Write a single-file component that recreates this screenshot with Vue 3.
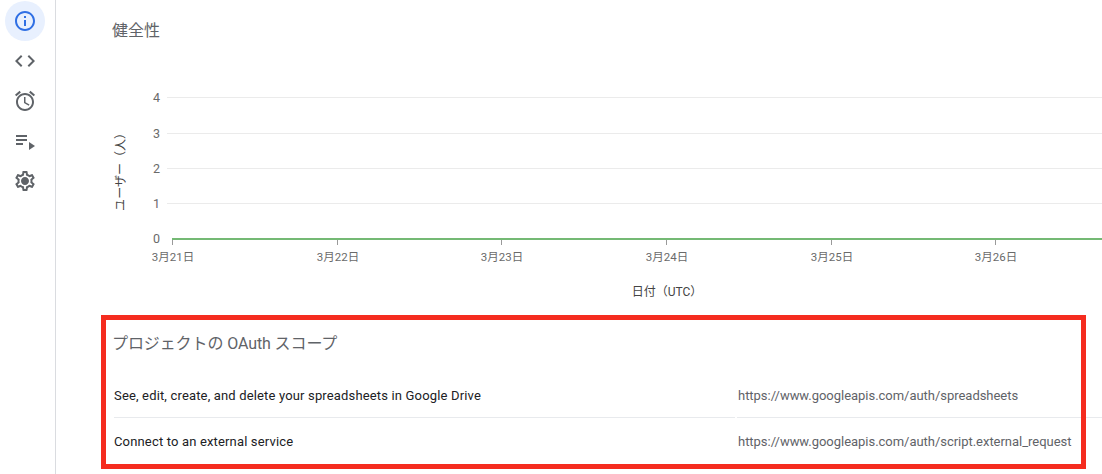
<script setup>
const yTicks = [
  { label: '4', y: 97.5 },
  { label: '3', y: 133.5 },
  { label: '2', y: 168.5 },
  { label: '1', y: 203.5 },
]
const xTicks = [
  { label: '3月21日', x: 172.5 },
  { label: '3月22日', x: 337.5 },
  { label: '3月23日', x: 501.5 },
  { label: '3月24日', x: 666.5 },
  { label: '3月25日', x: 831.5 },
  { label: '3月26日', x: 995.5 },
]
const scopes = [
  { name: 'See, edit, create, and delete your spreadsheets in Google Drive', url: 'https://www.googleapis.com/auth/spreadsheets' },
  { name: 'Connect to an external service', url: 'https://www.googleapis.com/auth/script.external_request' },
]
</script>

<template>
  <div class="page">
    <nav class="rail">
      <div class="nav-btn active">
        <svg viewBox="0 0 24 24" width="24" height="24"><path fill="#2f6fe4" d="M11 7h2v2h-2zm0 4h2v6h-2zm1-9C6.48 2 2 6.48 2 12s4.48 10 10 10 10-4.48 10-10S17.52 2 12 2zm0 18c-4.41 0-8-3.59-8-8s3.59-8 8-8 8 3.59 8 8-3.59 8-8 8z"/></svg>
      </div>
      <div class="nav-btn">
        <svg viewBox="0 0 24 24" width="24" height="24"><path fill="#5f6368" d="M9.4 16.6 4.8 12l4.6-4.6L8 6l-6 6 6 6 1.4-1.4zm5.2 0 4.6-4.6-4.6-4.6L16 6l6 6-6 6-1.4-1.4z"/></svg>
      </div>
      <div class="nav-btn">
        <svg viewBox="0 0 24 24" width="24" height="24"><path fill="#5f6368" d="M22 5.72l-4.6-3.86-1.29 1.53 4.6 3.86L22 5.72zM7.88 3.39 6.6 1.86 2 5.71l1.29 1.53 4.59-3.85zM12.5 8H11v6l4.75 2.85.75-1.23-4-2.37V8zM12 4c-4.97 0-9 4.03-9 9s4.03 9 9 9 9-4.03 9-9-4.03-9-9-9zm0 16c-3.87 0-7-3.13-7-7s3.13-7 7-7 7 3.13 7 7-3.13 7-7 7z"/></svg>
      </div>
      <div class="nav-btn">
        <svg viewBox="0 0 24 24" width="24" height="24"><path fill="#5f6368" d="M3 10h11v2H3zm0-4h11v2H3zm0 8h7v2H3zm13-1v8l6-4z"/></svg>
      </div>
      <div class="nav-btn">
        <svg viewBox="0 0 24 24" width="24" height="24"><path fill="#5f6368" d="M19.43 12.98c.04-.32.07-.64.07-.98s-.03-.66-.07-.98l2.11-1.65c.19-.15.24-.42.12-.64l-2-3.46c-.12-.22-.39-.3-.61-.22l-2.49 1c-.52-.4-1.08-.73-1.69-.98l-.38-2.65A.488.488 0 0 0 14 2h-4c-.25 0-.46.18-.49.42l-.38 2.65c-.61.25-1.17.59-1.69.98l-2.49-1a.566.566 0 0 0-.18-.03c-.17 0-.34.09-.43.25l-2 3.46c-.13.22-.07.49.12.64l2.11 1.65c-.04.32-.07.65-.07.98s.03.66.07.98l-2.11 1.65c-.19.15-.24.42-.12.64l2 3.46c.12.22.39.3.61.22l2.49-1c.52.4 1.08.73 1.69.98l.38 2.65c.03.24.24.42.49.42h4c.25 0 .46-.18.49-.42l.38-2.65c.61-.25 1.17-.59 1.69-.98l2.49 1c.06.02.12.03.18.03.17 0 .34-.09.43-.25l2-3.46c.12-.22.07-.49-.12-.64l-2.11-1.65zm-1.98-1.71c.04.31.05.52.05.73s-.02.43-.05.73l-.14 1.13.89.7 1.08.84-.7 1.21-1.27-.51-1.04-.42-.9.68c-.43.32-.84.56-1.25.73l-1.06.43-.16 1.13-.2 1.35h-1.4l-.19-1.35-.16-1.13-1.06-.43c-.43-.18-.83-.41-1.23-.71l-.91-.7-1.06.43-1.27.51-.7-1.21 1.08-.84.89-.7-.14-1.13c-.03-.31-.05-.54-.05-.74s.02-.43.05-.73l.14-1.13-.89-.7-1.08-.84.7-1.21 1.27.51 1.04.42.9-.68c.43-.32.84-.56 1.25-.73l1.06-.43.16-1.13.2-1.35h1.39l.19 1.35.16 1.13 1.06.43c.43.18.83.41 1.23.71l.91.7 1.06-.43 1.27-.51.7 1.21-1.07.85-.89.7.14 1.13zM12 8c-2.21 0-4 1.79-4 4s1.79 4 4 4 4-1.79 4-4-1.79-4-4-4z"/></svg>
      </div>
    </nav>

    <main class="main">
      <h2 class="title health">健全性</h2>

      <svg class="chart" width="1046" height="256" viewBox="56 52 1046 256">
        <g v-for="t in yTicks" :key="t.label">
          <line x1="167" :y1="t.y" x2="1102" :y2="t.y" stroke="#ebebeb" />
          <text x="160" :y="t.y + 4" text-anchor="end" class="tick num">{{ t.label }}</text>
        </g>
        <text x="160" y="243" text-anchor="end" class="tick num">0</text>
        <g v-for="t in xTicks" :key="t.x">
          <line :x1="t.x" y1="239" :x2="t.x" y2="245" stroke="#9a9a9a" />
          <text :x="t.x + 0.5" y="261" text-anchor="middle" class="tick">{{ t.label }}</text>
        </g>
        <line x1="172" y1="239" x2="1102" y2="239" stroke="#74b974" stroke-width="2" />
        <text x="667" y="296" text-anchor="middle" class="axis">日付（UTC）</text>
        <text transform="translate(125 169) rotate(-90)" text-anchor="middle" class="axis">ユーザー（人）</text>
      </svg>

      <section class="scopes">
        <h2 class="title scope-title">プロジェクトの OAuth スコープ</h2>
        <div class="rows">
          <div v-for="s in scopes" :key="s.url" class="row">
            <div class="cell name">{{ s.name }}</div>
            <div class="cell url">{{ s.url }}</div>
          </div>
        </div>
      </section>
    </main>

    <div class="highlight"></div>
  </div>
</template>

<style scoped>
.page {
  position: relative;
  display: flex;
  width: 1102px;
  height: 474px;
  overflow: hidden;
  background: #fff;
  font-family: Roboto, "Noto Sans CJK JP", sans-serif;
}
.rail {
  box-sizing: border-box;
  flex: 0 0 56px;
  display: flex;
  flex-direction: column;
  padding: 1px 0 0 5px;
  border-right: 1px solid #dadce0;
}
.nav-btn {
  width: 40px;
  height: 40px;
  display: flex;
  align-items: center;
  justify-content: center;
}
.nav-btn.active {
  border-radius: 50%;
  background: #e8f0fe;
}
.main {
  flex: 1;
  min-width: 0;
  display: flex;
  flex-direction: column;
}
.title {
  margin: 0;
  padding-left: 56px;
  height: 24px;
  line-height: 24px;
  font-size: 16px;
  font-weight: 400;
  color: #5f6368;
}
.health {
  margin-top: 19px;
  margin-bottom: 9px;
}
.scope-title {
  letter-spacing: -0.1px;
}
.chart {
  display: block;
  flex: none;
}
.tick {
  font-size: 11.5px;
  fill: #6a6a6a;
  font-family: Roboto, "Noto Sans CJK JP", sans-serif;
}
.num {
  font-size: 12.5px;
}
.axis {
  font-size: 12px;
  fill: #444;
  font-family: Roboto, "Noto Sans CJK JP", sans-serif;
}
.scopes {
  margin-top: 24px;
}
.rows {
  margin-top: 16px;
}
.row {
  display: grid;
  grid-template-columns: 621px 1fr;
  column-gap: 2px;
  margin-left: 58px;
}
.cell {
  height: 45px;
  line-height: 47px;
  font-size: 13px;
  white-space: nowrap;
}
.row:first-child .cell {
  border-bottom: 1px solid #e8eaed;
}
.name {
  color: #202124;
  letter-spacing: 0.16px;
}
.url {
  color: #5f6368;
  padding-left: 1px;
  letter-spacing: -0.03px;
}
.highlight {
  position: absolute;
  left: 101px;
  top: 315px;
  width: 985px;
  height: 154px;
  box-sizing: border-box;
  border: 5px solid #f52c1f;
  pointer-events: none;
}
</style>
